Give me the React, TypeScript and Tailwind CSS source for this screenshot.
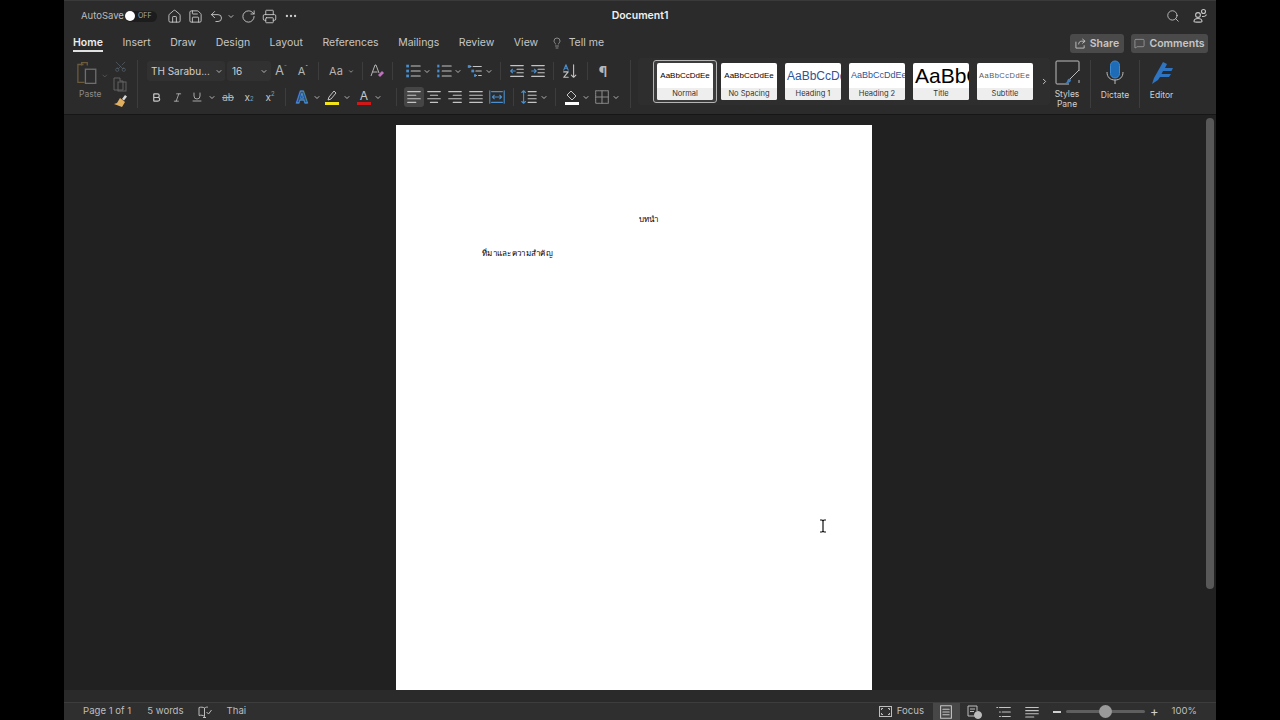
import React from "react";
import {
  Home,
  Save,
  Undo2,
  RotateCw,
  Printer,
  Ellipsis,
  Search,
  Lightbulb,
  Scissors,
  ChevronDown,
  ChevronRight,
  Bold,
  Italic,
  Underline,
  MessageSquare,
} from "lucide-react";

const G = "#c4c4c4";
const BLUE = "#4a90d0";

// small svg wrapper, every ribbon glyph is drawn on a 20 box
const Ico = ({ children, size = 18 }: { children: React.ReactNode; size?: number }) => (
  <svg width={size} height={size} viewBox="0 0 20 20" fill="none" stroke={G} strokeWidth="1.2" strokeLinecap="round" strokeLinejoin="round">
    {children}
  </svg>
);

const Chev = ({ className = "w-[8px]" }: { className?: string }) => (
  <div className={`flex justify-center ${className}`}>
    <ChevronDown size={9} strokeWidth={2.6} color="#c8c8c8" />
  </div>
);

const Sep = ({ className = "" }: { className?: string }) => <div className={`h-[18px] w-px bg-[#3d3d3d] ${className}`} />;

const Cell = ({ children, className = "" }: { children: React.ReactNode; className?: string }) => (
  <div className={`flex h-[20px] w-[20px] shrink-0 items-center justify-center ${className}`}>{children}</div>
);

const Lines = ({ d }: { d: string }) => (
  <Ico>
    <path d={d} />
  </Ico>
);

const ListIcon = ({ kind }: { kind: "bullet" | "number" | "multi" }) => (
  <Ico>
    {kind === "multi" ? (
      <>
        <path d="M4 5h1.5M8 5h9M7 10h1.5M11 10h6M10 15h1.5M14 15h3" stroke={G} />
        <rect x="2" y="3.5" width="3" height="3" fill={BLUE} stroke="none" />
        <rect x="6" y="8.5" width="3" height="3" fill={BLUE} stroke="none" />
        <rect x="9" y="13.5" width="2" height="3" fill={BLUE} stroke="none" />
      </>
    ) : (
      <>
        <path d="M8 4.5h10M8 10h10M8 15.5h10" />
        {[3, 8.5, 14].map((y) => (
          <rect key={y} x="2.5" y={y} width={kind === "bullet" ? 3 : 2.4} height="3" fill={BLUE} stroke="none" />
        ))}
      </>
    )}
  </Ico>
);

const Swatch = ({ color, children }: { color: string; children: React.ReactNode }) => (
  <div className="flex flex-col items-center">
    {children}
    <div className="mt-[1px] h-[3px] w-[14px]" style={{ backgroundColor: color }} />
  </div>
);

const Card = ({ label, sample, left }: { label: string; sample: React.ReactNode; left?: boolean }) => (
  <div className="flex h-[37px] w-[56px] shrink-0 flex-col overflow-hidden rounded-[2px] bg-white">
    <div className={`flex h-[25px] items-center overflow-hidden whitespace-nowrap font-['Liberation_Sans',sans-serif] ${left ? "justify-start pl-[2px]" : "justify-center"}`}>
      {sample}
    </div>
    <div className="flex h-[12px] items-center justify-center bg-[#eeeeee] text-[7.5px] text-[#333]">{label}</div>
  </div>
);

const tabs = ["Insert", "Draw", "Design", "Layout", "References", "Mailings", "Review", "View"];

const TitleBar = () => (
  <div className="flex h-[31px] shrink-0 items-center border-t border-[#3a3a3a] bg-[#2b2b2b] text-[#cfcfcf]">
    <div className="flex flex-1 items-center">
      <span className="ml-[17px] w-[44px] text-[9.5px] text-[#bdbdbd]">AutoSave</span>
      <div className="flex h-[11px] w-[32px] items-center rounded-full bg-[#1c1c1c]">
        <div className="h-[10px] w-[10px] rounded-full bg-white" />
        <span className="ml-[3px] text-[7px] text-[#aaa]">OFF</span>
      </div>
      <Cell className="ml-[7px]">
        <Home size={15} strokeWidth={1.4} />
      </Cell>
      <Cell className="ml-[1px]">
        <Save size={15} strokeWidth={1.4} />
      </Cell>
      <Cell className="ml-[1px]">
        <Undo2 size={15} strokeWidth={1.4} />
      </Cell>
      <Chev className="ml-[1px] w-[8px]" />
      <Cell className="ml-[3px]">
        <RotateCw size={15} strokeWidth={1.4} />
      </Cell>
      <Cell className="ml-[1px]">
        <Printer size={15} strokeWidth={1.4} />
      </Cell>
      <Cell className="ml-[2px]">
        <Ellipsis size={14} strokeWidth={2} />
      </Cell>
    </div>
    <span className="text-[10.5px] font-semibold text-[#efefef]">Document1</span>
    <div className="flex flex-1 items-center justify-end">
      <Search size={14} strokeWidth={1.4} />
      <div className="ml-[12px] mr-[8px]">
        <svg width="16" height="16" viewBox="0 0 16 16" fill="none" stroke={G} strokeWidth="1.1">
          <circle cx="6" cy="7" r="2.4" />
          <path d="M2 13.5c0-2.2 2-3 4-3s4 .8 4 3c0 1-8 1-8 0z" />
          <circle cx="11.5" cy="3.5" r="2" />
          <path d="M10 8.5c2 .2 4-.2 4.400-2" />
        </svg>
      </div>
    </div>
  </div>
);

const TabRow = () => (
  <div className="flex h-[24px] shrink-0 items-center bg-[#2b2b2b] pl-[9px] pr-[8px] text-[10.5px] text-[#c6c6c6]">
    <div className="flex items-center gap-[19.5px]">
      <div className="relative font-semibold text-[#ececec]">
        Home
        <div className="absolute inset-x-0 top-[15px] h-[2px] bg-[#e0e0e0]" />
      </div>
      {tabs.map((t) => (
        <span key={t}>{t}</span>
      ))}
      <div className="ml-[-7px] flex items-center gap-[6px]">
        <Lightbulb size={12} strokeWidth={1.2} />
        <span>Tell me</span>
      </div>
    </div>
    <div className="ml-auto mt-[1px] flex items-center gap-[7px] font-semibold">
      <div className="flex h-[19px] w-[54px] items-center justify-center gap-[4px] rounded-[3px] bg-[#4a4a4a]">
        <svg width="11" height="11" viewBox="0 0 12 12" fill="none" stroke={G} strokeWidth="1">
          <path d="M8 1l3 2.500L8 6M11 3.500H7C5 3.500 4 5 4 7M1 4v7h9V8" />
        </svg>
        Share
      </div>
      <div className="flex h-[19px] w-[77px] items-center justify-center gap-[4px] rounded-[3px] bg-[#4a4a4a]">
        <MessageSquare size={11} strokeWidth={1.2} />
        Comments
      </div>
    </div>
  </div>
);

const Clipboard = () => (
  <div className="flex w-[73px] shrink-0 pl-[12px] pt-[5px]">
    <div className="flex w-[33px] flex-col">
      <div className="flex items-center">
        <svg width="26" height="26" viewBox="0 0 26 26" fill="none" strokeWidth="1.4">
          <path d="M8 4H2v19h7" stroke="#6b5a3c" />
          <path d="M6 5V2h6v3" stroke="#6b5a3c" />
          <rect x="10" y="9" width="11" height="15" stroke="#6e6e6e" />
        </svg>
        <ChevronDown size={8} strokeWidth={2} color="#6a6a6a" className="ml-[1px] mt-[6px]" />
      </div>
      <span className="mt-[2px] pl-[3px] text-[8.5px] text-[#8a8a8a]">Paste</span>
    </div>
    <div className="flex w-[22px] flex-col items-center">
      <Scissors size={13} strokeWidth={1.1} color="#5f6a75" className="rotate-[-90deg]" />
      <svg width="14" height="15" viewBox="0 0 14 15" fill="none" stroke="#626262" className="mt-[4px]">
        <path d="M1 1h6v3h3v9H1zM5 3v0" />
        <rect x="5" y="5" width="8" height="9" />
      </svg>
      <svg width="15" height="14" viewBox="0 0 15 14" className="mt-[2px]">
        <path d="M9 5l3-4 2 1.500-3 4z" fill="#d8d8d8" />
        <path d="M7 4l5 4-3 5-8-3 3-1z" fill="#e0b060" />
      </svg>
    </div>
  </div>
);

const FontRows = () => (
  <div className="flex flex-col gap-[6px] pt-[6px]">
    <div className="flex h-[20px] items-center">
      <div className="ml-[1px] flex h-[20px] w-[78px] items-center justify-between rounded-[3px] bg-[#313131] pl-[4px] pr-[2px] text-[10px] text-[#cfcfcf]">
        TH Sarabu...
        <Chev />
      </div>
      <div className="ml-[2px] flex h-[20px] w-[44px] items-center justify-between rounded-[3px] bg-[#313131] pl-[5px] pr-[3px] text-[10px] text-[#cfcfcf]">
        16
        <Chev />
      </div>
      <Cell className="w-[20px] text-[13px] text-[#b5b5b5]">
        A<sup className="text-[7px] text-[#7fa8cc]">ˆ</sup>
      </Cell>
      <Cell className="w-[24px] text-[11px] text-[#b5b5b5]">
        A<sup className="text-[7px] text-[#7fa8cc]">ˇ</sup>
      </Cell>
      <Sep className="ml-[3px] mr-[5px]" />
      <Cell className="w-[24px] text-[11px] text-[#b5b5b5]">Aa</Cell>
      <Chev className="w-[6px]" />
      <Sep className="ml-[8px] mr-[4px]" />
      <Cell>
        <svg width="16" height="16" viewBox="0 0 16 16" fill="none">
          <path d="M2 13L6 2h1l3 8M3.500 9h5" stroke="#b5b5b5" />
          <path d="M9 12l4-4 2 2-4 4z" fill="#c070c0" />
        </svg>
      </Cell>
      <Sep className="ml-[5px] mr-[10px]" />
      <Cell>
        <ListIcon kind="bullet" />
      </Cell>
      <Chev />
      <Cell className="ml-[3px]">
        <ListIcon kind="number" />
      </Cell>
      <Chev />
      <Cell className="ml-[3px]">
        <ListIcon kind="multi" />
      </Cell>
      <Chev />
      <Sep className="ml-[7px] mr-[6px]" />
      <Cell>
        <Ico>
          <path d="M3 4h14M10 8h7M10 12h7M3 16h14" />
          <path d="M8 10H3M5 8l-2 2 2 2" stroke={BLUE} />
        </Ico>
      </Cell>
      <Cell className="ml-[1px]">
        <Ico>
          <path d="M3 4h14M10 8h7M10 12h7M3 16h14" />
          <path d="M3 10h5M6 8l2 2-2 2" stroke={BLUE} />
        </Ico>
      </Cell>
      <Sep className="ml-[5px] mr-[6px]" />
      <Cell>
        <Ico>
          <path d="M14 3v14M11.500 14.500l2.500 2.500 2.500-2.500" />
          <path d="M3 9l2.500-6L8 9M4 7h3" stroke={BLUE} />
          <path d="M3 11h5l-5 6h5" />
        </Ico>
      </Cell>
      <Sep className="ml-[7px] mr-[5px]" />
      <Cell className="text-[14px] font-bold text-[#b8b8b8]">¶</Cell>
    </div>
    <div className="flex h-[20px] items-center">
      <Cell>
        <Bold size={11} strokeWidth={2.6} color="#c8c8c8" />
      </Cell>
      <Cell className="ml-[1px]">
        <Italic size={11} strokeWidth={1.6} color="#c8c8c8" />
      </Cell>
      <Cell>
        <Underline size={12} strokeWidth={1.6} color="#c8c8c8" />
      </Cell>
      <Chev className="ml-[1px] w-[8px]" />
      <Cell className="ml-[2px] text-[10px] text-[#b0b0b0] line-through">ab</Cell>
      <Cell className="ml-[1px] text-[10px] text-[#c8c8c8]">
        x<sub className="text-[6px] text-[#6fa0cc]">2</sub>
      </Cell>
      <Cell className="ml-[1px] text-[10px] text-[#c8c8c8]">
        x<sup className="text-[6px] text-[#6fa0cc]">2</sup>
      </Cell>
      <Sep className="ml-[5px] mr-[6px]" />
      <Cell className="text-[16px] font-bold text-[#1f4f80] [-webkit-text-stroke:0.8px_#5a9ad8]">A</Cell>
      <Chev className="ml-[1px] w-[8px]" />
      <Cell className="ml-[1px]">
        <Swatch color="#f2e418">
          <svg width="14" height="11" viewBox="0 0 14 11" fill="none" stroke={G}>
            <path d="M3 10l1-3 5-6 2 2-5 6z" />
          </svg>
        </Swatch>
      </Cell>
      <Chev className="ml-[1px] w-[8px]" />
      <Cell className="ml-[3px]">
        <Swatch color="#d01818">
          <span className="text-[12px] leading-[11px] text-[#c8c8c8]">A</span>
        </Swatch>
      </Cell>
      <Chev />
      <Sep className="ml-[14px] mr-[7px]" />
      <Cell className="rounded-[3px] bg-[#454545]">
        <Lines d="M3 4h14M3 8h9M3 12h14M3 16h9" />
      </Cell>
      <Cell>
        <Lines d="M3 4h14M6 8h8M3 12h14M6 16h8" />
      </Cell>
      <Cell className="ml-[1px]">
        <Lines d="M3 4h14M8 8h9M3 12h14M8 16h9" />
      </Cell>
      <Cell className="ml-[1px]">
        <Lines d="M3 4h14M3 8h14M3 12h14M3 16h14" />
      </Cell>
      <Cell className="ml-[1px]">
        <Ico>
          <path d="M2 3v14M18 3v14M5 10h10M7 8l-2 2 2 2M13 8l2 2-2 2" stroke={BLUE} />
          <path d="M4 4h12M4 16h12" stroke={BLUE} />
        </Ico>
      </Cell>
      <Sep className="ml-[6px] mr-[5px]" />
      <Cell>
        <Ico>
          <path d="M9 4h9M9 8h9M9 12h9M9 16h9" />
          <path d="M4 3v14M2 5l2-2 2 2M2 15l2 2 2-2" stroke={BLUE} />
        </Ico>
      </Cell>
      <Chev className="ml-[1px] w-[8px]" />
      <Sep className="ml-[7px] mr-[6px]" />
      <Cell>
        <Swatch color="#ffffff">
          <svg width="14" height="11" viewBox="0 0 14 11" fill="none" stroke={G}>
            <path d="M6 1l5 5-4 4-5-5z" />
          </svg>
        </Swatch>
      </Cell>
      <Chev />
      <Cell className="ml-[2px]">
        <Ico>
          <rect x="3" y="3" width="14" height="14" stroke="#8a8a8a" strokeDasharray="1.500 1" />
          <path d="M10 3v14M3 10h14" stroke="#8a8a8a" />
        </Ico>
      </Cell>
      <Chev />
    </div>
  </div>
);

const Gallery = () => (
  <div className="flex h-[47px] w-[412px] shrink-0 items-center rounded-[3px] bg-[#2e2e2e] pl-[15px]">
    <div className="flex h-[43px] w-[64px] shrink-0 items-center justify-center rounded-[3px] border border-[#b4b4b4] bg-[#3c3c3c]">
      <Card label="Normal" sample={<span className="text-[8px] text-black">AaBbCcDdEe</span>} />
    </div>
    <div className="ml-[4px] flex gap-[8px]">
      <Card label="No Spacing" sample={<span className="text-[8px] text-black">AaBbCcDdEe</span>} />
      <Card left label="Heading 1" sample={<span className="text-[12px] text-[#2f5496]">AaBbCcDdEe</span>} />
      <Card left label="Heading 2" sample={<span className="text-[9px] text-[#2f5496]">AaBbCcDdEe</span>} />
      <Card left label="Title" sample={<span className="text-[21px] leading-[25px] text-black">AaBbCcDdEe</span>} />
      <Card left label="Subtitle" sample={<span className="text-[7.5px] tracking-[0.5px] text-[#595959]">AaBbCcDdEe</span>} />
    </div>
    <ChevronRight size={9} strokeWidth={2.6} color="#c8c8c8" className="ml-[7px]" />
  </div>
);

const RightTools = () => (
  <div className="flex h-[52px] items-start text-[8.5px] text-[#cfcfcf]">
    <div className="ml-[4px] flex w-[26px] flex-col items-center text-center leading-[10px]">
      <svg width="25" height="25" viewBox="0 0 25 25" fill="none">
        <path d="M14 24H2a1 1 0 0 1-1-1V2a1 1 0 0 1 1-1h21a1 1 0 0 1 1 1v9M24 20v3" stroke="#bdbdbd" />
        <path d="M24 10L14 20" stroke="#bdbdbd" />
        <path d="M9 23c2 0 3-.5 3.500-3 1-2 3-1.500 3.500 0 0 2-3 4-7 3z" fill="#3f7fc0" />
      </svg>
      <span className="mt-[4px]">Styles</span>
      <span>Pane</span>
    </div>
    <Sep className="ml-[10px] h-[48px]" />
    <div className="flex w-[48px] flex-col items-center">
      <svg width="20" height="25" viewBox="0 0 20 25" fill="none">
        <rect x="5.500" y="1" width="9" height="17" rx="4.500" fill="#1e6bb8" stroke="#3f8ad0" />
        <path d="M2 12c0 5 3 8 8 8s8-3 8-8M10 20v4" stroke="#bdbdbd" />
      </svg>
      <span className="mt-[4px]">Dictate</span>
    </div>
    <Sep className="h-[48px]" />
    <div className="flex w-[43px] flex-col items-center">
      <svg width="26" height="25" viewBox="0 0 26 25" fill="none">
        <path d="M5 18L14 2l4 2-2 4h8l-1.500 3H14l-1.500 3H22l-2 3h-9l-2 3-6 4z" fill="#2e74c0" />
      </svg>
      <span className="mt-[4px]">Editor</span>
    </div>
  </div>
);

const Ribbon = () => (
  <div className="flex h-[60px] shrink-0 items-start border-b border-[#161616] bg-[#2b2b2b]">
    <Clipboard />
    <Sep className="mt-[5px] h-[48px]" />
    <div className="ml-[8px] w-[484px] shrink-0">
      <FontRows />
    </div>
    <Sep className="mr-[7px] mt-[5px] h-[48px]" />
    <div className="mt-[3px]">
      <Gallery />
    </div>
    <div className="mt-[5px]">
      <RightTools />
    </div>
  </div>
);

const Page = () => (
  <div className="flex h-[565px] w-[476px] shrink-0 flex-col bg-white pl-[86px] pr-[57px] pt-[85px] font-['Noto_Sans','Liberation_Sans',sans-serif] text-[8px] leading-[18px] tracking-[0.3px] text-black">
    <p className="text-center">บทนำ</p>
    <p className="mt-[16px]">ที่มาและความสำคัญ</p>
  </div>
);

const StatusBar = () => (
  <div className="flex h-[18px] shrink-0 items-center border-t border-[#3d3d3d] bg-[#2f2f2f] pl-[19px] pr-[19px] text-[9.6px] text-[#bdbdbd]">
    <span>Page 1 of 1</span>
    <span className="ml-[16px]">5 words</span>
    <svg width="14" height="12" viewBox="0 0 14 12" fill="none" stroke="#bdbdbd" className="ml-[14px]">
      <path d="M6.500 2C5 1 3 1 1 1.500v8C3 9 5 9 6.500 10.500zM6.500 10.500V2C8 1 9 1 10 1.200M5 11.500h3M8.500 6l2 2 3-4" />
    </svg>
    <span className="ml-[15px]">Thai</span>
    <div className="ml-auto flex h-full items-center">
      <svg width="13" height="11" viewBox="0 0 13 11" fill="none" stroke="#bdbdbd">
        <rect x="0.500" y="0.500" width="12" height="10" />
        <path d="M2.500 4V2.500H4M9 2.500h1.500V4M2.500 7v1.500H4M9 8.500h1.500V7" />
      </svg>
      <span className="ml-[5px]">Focus</span>
      <div className="ml-[9px] flex h-full w-[27px] items-center justify-center bg-[#474747]">
        <Lines d="M4 3h12v14H4zM6.500 7h7M6.500 10h7M6.500 13h7" />
      </div>
      <div className="flex w-[30px] justify-center">
        <svg width="15" height="14" viewBox="0 0 15 14" fill="none" stroke="#bdbdbd">
          <path d="M9 11H1V1h9v5M3 4h5M3 6.500h4" />
          <circle cx="11" cy="10" r="3.500" fill="#bdbdbd" />
        </svg>
      </div>
      <div className="flex w-[28px] justify-center">
        <Lines d="M5 5h12M8 10h9M8 15h9M2 5h1M5 10h1M5 15h1" />
      </div>
      <div className="flex w-[28px] justify-center">
        <Lines d="M3 5h14M3 8.500h14M3 12h14M3 15.500h9" />
      </div>
      <span className="ml-[7px] h-[2px] w-[8px] bg-[#cfcfcf]" />
      <div className="relative ml-[5px] h-[3px] w-[79px] rounded-full bg-[#5f5f5f]">
        <div className="absolute left-[33px] top-[-5px] h-[13px] w-[13px] rounded-full bg-[#9a9a9a]" />
      </div>
      <div className="ml-[5px] text-[13px] leading-none text-[#cfcfcf]">+</div>
      <span className="ml-[13px]">100%</span>
    </div>
  </div>
);

export default function App() {
  return (
    <div className="flex h-[720px] w-[1280px] justify-center overflow-hidden bg-black font-['Inter','Liberation_Sans',sans-serif]">
      <div className="flex w-[1152px] flex-col">
        <TitleBar />
        <TabRow />
        <Ribbon />
        <div className="relative flex h-[575px] shrink-0 bg-[#212121]">
          <div className="flex flex-1 justify-center pt-[10px]">
            <div className="mr-[12px]">
              <Page />
            </div>
          </div>
          <div className="absolute right-[2px] top-[3px] h-[471px] w-[8px] rounded-full bg-[#585858]" />
          {/* mouse cursor */}
          <svg width="8" height="14" viewBox="0 0 8 14" fill="none" stroke="#111" strokeWidth="1.2" className="absolute left-[755px] top-[404px]">
            <path d="M1 1h2l1 1 1-1h2M4 2v10M1 13h2l1-1 1 1h2" />
          </svg>
        </div>
        <div className="h-[12px] shrink-0 bg-[#2a2a2a]" />
        <StatusBar />
      </div>
    </div>
  );
}
